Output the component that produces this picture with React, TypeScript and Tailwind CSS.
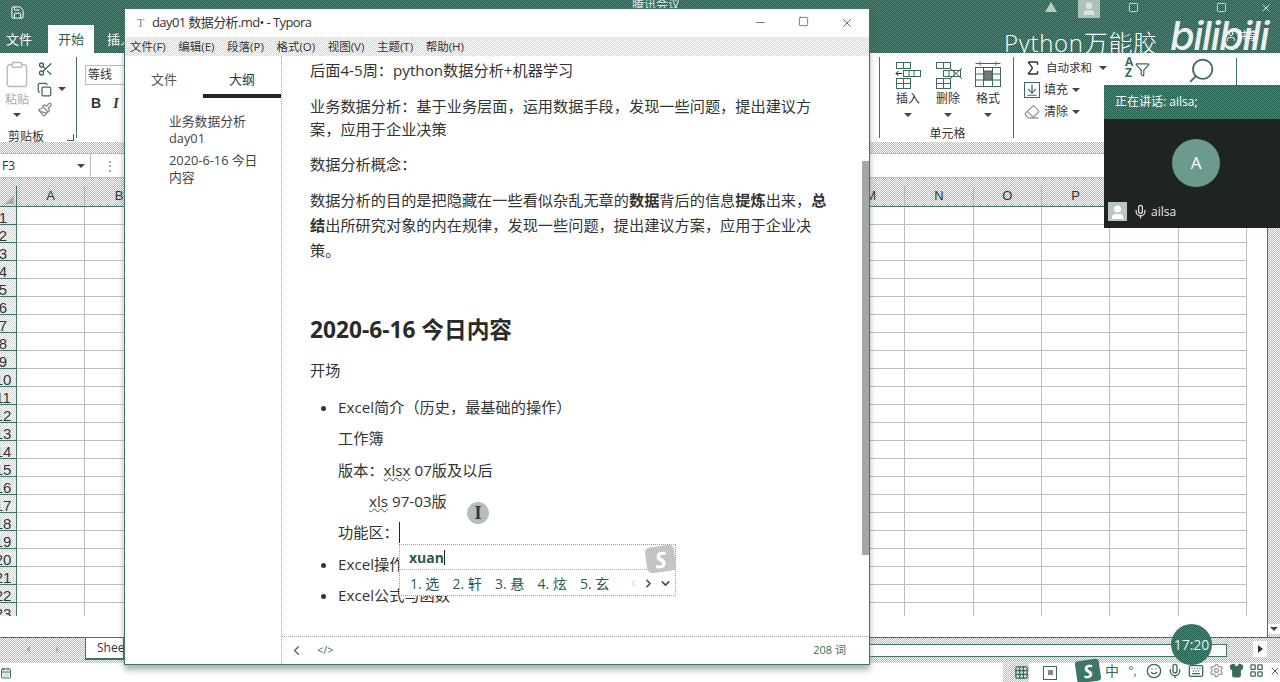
import { Scissors, Copy, Paintbrush, ChevronLeft, ChevronRight, ChevronDown, Mic, Smile, Keyboard, Grid3x3, Minus, Square, X, User, Save, Sigma, Search, ArrowDownToLine, Eraser, Filter, Shirt, LayoutGrid, CalendarDays, Settings, Clipboard } from "lucide-react";

const dGray = "bg-[image:repeating-conic-gradient(#b4b9b7_0_25%,#ffffff_0_50%)] bg-[length:2px_2px]";
const dTeal = "bg-[image:repeating-conic-gradient(#1d5c4b_0_25%,#578a7c_0_50%)] bg-[length:2px_2px]";
const dLight = "bg-[image:repeating-conic-gradient(#d4d6d5_0_25%,#ffffff_0_50%)] bg-[length:2px_2px]";

const columns = ["A", "B", "C", "D", "E", "F", "G", "H", "I", "J", "K", "L", "M", "N", "O", "P", "Q", "R"];
const rows = Array.from({ length: 24 }, (_, i) => i + 1);

function Caret() {
  return <span className="block w-0 h-0 border-x-[4px] border-x-transparent border-t-[4px] border-t-[#444]" />;
}

function CellIcon({ kind }: { kind: "insert" | "delete" | "format" }) {
  return (
    <svg width="30" height="30" viewBox="0 0 30 30" fill="none" stroke="#3c6b5e" strokeWidth="1">
      {kind === "format" ? (
        <>
          <rect x="2.5" y="7.5" width="25" height="19" />
          <path d="M2.5 3.5h25M6 3.5l2-2M6 3.5l2 2M24 3.5l-2-2M24 3.5l-2 2M10.5 7.5v19M19.5 7.5v19M2.5 14h25M2.5 20h25" />
          <rect x="11" y="11" width="8" height="9" fill="#777" />
        </>
      ) : (
        <>
          <rect x="3.5" y="2.5" width="14" height="6" />
          <path d="M10.5 2.5v6" />
          <rect x="3.5" y="18.5" width="14" height="10" />
          <path d="M10.5 18.5v10M3.5 23.5h14" />
          <rect x="10.5" y="10.5" width="17" height="6" />
          <path d="M16 10.5v6M21 10.5v6" />
          {kind === "insert" ? <path d="M9 13.5H3M5.5 11l-2.5 2.5 2.5 2.5" stroke="#222" /> : <path d="M17 19L29 8M17 8l12 11" stroke="#555" />}
        </>
      )}
    </svg>
  );
}

function CellCommand({ kind, label }: { kind: "insert" | "delete" | "format"; label: string }) {
  return (
    <div className="w-[40px] flex flex-col items-center">
      <CellIcon kind={kind} />
      <span className="text-[12px] leading-[16px] mt-[1px]">{label}</span>
      <span className="mt-[6px]"><Caret /></span>
    </div>
  );
}

function ExcelWindow() {
  return (
    <div className="flex flex-col h-[682px] text-[#333]">
      <header className={`${dTeal} h-[53px] shrink-0 flex flex-col justify-between`}>
        <div className="h-[25px] flex items-center pl-[10px] pr-[8px] text-white">
          <Save size={15} strokeWidth={1.6} />
          <div className="ml-auto flex items-start h-[25px] opacity-80">
            <span className="block w-0 h-0 mt-[2px] border-x-[6px] border-x-transparent border-b-[10px] border-b-[#d7e2de]" />
            <span className="ml-[21px] w-[22px] h-[18px] bg-[#c9d3d0] flex items-center justify-center"><User size={16} fill="#fff" stroke="#fff" /></span>
            <Square size={11} className="ml-[28px] mt-[2px]" />
            <Square size={11} className="ml-[77px] mt-[2px]" />
            <X size={12} className="ml-[33px] mt-[2px]" />
          </div>
        </div>
        <nav className="h-[28px] flex items-end text-[13px]">
          <span className="text-white pl-[6px] w-[48px] leading-[28px]">文件</span>
          <span className="w-[46px] h-[28px] bg-white text-center leading-[28px] text-[#2c5a4e]">开始</span>
          <span className="text-white pl-[13px] leading-[28px]">插入</span>
        </nav>
      </header>

      <section className="h-[89px] shrink-0 bg-white flex justify-between text-[12px]">
        <div className="flex">
          <div className="w-[77px] border-r border-[#3f7566] my-[4px] h-[81px] relative flex flex-col">
            <div className="flex pl-[3px] pt-[3px] gap-[6px] h-[60px]">
              <div className="flex flex-col items-center w-[28px] text-[#aaa]">
                <Clipboard size={30} strokeWidth={1.2} className="text-[#bbb]" />
                <span className="leading-[15px] mt-[3px] whitespace-nowrap">粘贴</span>
                <span className="mt-[6px]"><Caret /></span>
              </div>
              <div className="flex flex-col gap-[5px] items-start text-[#3a6a5d] pt-[1px]">
                <Scissors size={17} />
                <span className="flex items-center gap-[6px]"><Copy size={15} /><Caret /></span>
                <Paintbrush size={16} className="text-[#888]" />
              </div>
            </div>
            <div className="flex items-center justify-between pl-[8px] pr-[2px] mt-[11px]">
              <span className="text-[#333]">剪贴板</span>
              <span className="w-[7px] h-[7px] border-l border-t border-[#555] rotate-180" />
            </div>
          </div>
          <div className="pl-[8px] pt-[12px] w-[47px]">
            <div className="h-[20px] w-[60px] border border-[#bbb] bg-white pl-[2px] leading-[18px]">等线</div>
            <div className="flex gap-[12px] font-['Liberation_Serif',serif] pt-[8px] pl-[6px] text-[14px] font-bold">
              <span className="font-['Liberation_Sans',sans-serif]">B</span><span className="italic">I</span>
            </div>
          </div>
        </div>

        <div className="flex">
          <div className="flex border-l border-r border-[#3f7566] my-[4px] h-[81px] w-[135px] relative pl-[8px] pt-[3px]">
            <div className="flex flex-col w-full">
              <div className="flex"><CellCommand kind="insert" label="插入" /><CellCommand kind="delete" label="删除" /><CellCommand kind="format" label="格式" /></div>
              <span className="text-center pr-[6px] mt-[8px]">单元格</span>
            </div>
          </div>
          <div className="w-[266px] pl-[10px] pt-[5px] flex">
            <div className="flex flex-col gap-[3px] w-[95px]">
              <div className="h-[19px] flex items-center gap-[4px]"><Sigma size={18} className="text-[#333]" /><span className="text-[11.5px]">自动求和</span><span className="ml-[3px]"><Caret /></span></div>
              <div className="h-[19px] flex items-center gap-[4px]"><ArrowDownToLine size={16} className="text-[#3a6a5d] border border-[#3a6a5d]" /><span>填充</span><Caret /></div>
              <div className="h-[19px] flex items-center gap-[4px]"><Eraser size={16} className="text-[#999]" /><span>清除</span><Caret /></div>
            </div>
            <div className="flex items-start -mt-[2px]">
              <span className="leading-[11px] text-[12px] font-bold text-[#3a6a5d] w-[10px] ml-[6px]">A Z</span>
              <Filter size={15} className="text-[#3a6a5d] mt-[6px]" />
              <Search size={29} strokeWidth={1.5} className="ml-[37px] -scale-x-100 text-[#3a6a5d]" />
            </div>
            <div className="border-l border-[#3f7566] h-[28px] ml-[20px]" />
          </div>
        </div>
      </section>

      <div className={`${dGray} h-[11px] shrink-0`} />
      <div className="h-[25px] shrink-0 bg-white border-y border-[#bbb] flex items-center text-[12px]">
        <div className="w-[91px] h-full flex items-center justify-between pl-[2px] pr-[5px] border-r border-[#bbb]">
          <span>F3</span><Caret />
        </div>
        <span className="ml-[13px] text-[#777] leading-none">⋮</span>
      </div>
      <div className={`${dGray} h-[8px] shrink-0`} />

      <div className="flex-1 min-h-0 flex">
        <div className="w-[1267px] overflow-hidden">
          <div className={`${dGray} h-[21px] grid grid-cols-[17px_repeat(18,68.33px)] border-b border-[#3f7566] text-[13px] font-['Liberation_Sans',sans-serif]`}>
            <div className="border-r border-[#3f7566] relative overflow-hidden">
              <span className="absolute right-[2px] bottom-[2px] w-0 h-0 border-l-[9px] border-l-transparent border-b-[9px] border-b-[#aaa]" />
            </div>
            {columns.map((c) => (
              <div key={c} className="text-center leading-[20px] border-r border-[#b5b5b5]">{c}</div>
            ))}
          </div>
          <div className="h-[409px] overflow-hidden">
            {rows.map((r) => (
              <div key={r} className="h-[18px] grid grid-cols-[17px_repeat(18,68.33px)] font-['Liberation_Sans',sans-serif]">
                <div className={`${dLight} border-r border-b border-[#3f7566] text-[15px] leading-[21px] text-[#333] overflow-hidden whitespace-nowrap`}>
                  <span className="w-[6px] flex justify-center">{r}</span>
                </div>
                {columns.map((c) => (
                  <div key={c} className="border-r border-b border-[#bdbdbd] bg-white" />
                ))}
              </div>
            ))}
          </div>
        </div>
        <div className={`${dGray} w-[13px] border-l border-[#3f7566] flex flex-col justify-end pb-[3px] items-center`}>
          <span className="bg-white w-full flex justify-center py-[3px]"><Caret /></span>
        </div>
      </div>

      <div className={`${dGray} h-[26px] shrink-0 border-t border-[#3f7566] flex items-start`}>
        <div className="w-[85px] h-[22px] flex items-center justify-center gap-[18px] text-[#aaa]">
          <ChevronLeft size={11} fill="#aaa" /><ChevronRight size={11} fill="#aaa" />
        </div>
        <div className="w-[39px] h-[22px] bg-white border-x border-b-2 border-[#3f7566] text-[12px] pl-[11px] leading-[20px] overflow-hidden">Sheet1</div>
        <div className="mt-[6px] h-[13px] w-[1103px] bg-white border-y border-r border-[#3f7566]" />
        <span className="ml-[26px] mt-[3px] w-[14px] h-[16px] bg-white flex items-center justify-center">
          <span className="w-0 h-0 border-y-[4px] border-y-transparent border-l-[5px] border-l-[#333]" />
        </span>
      </div>

      <footer className="h-[19px] shrink-0 bg-white flex items-center text-[#3a6a5d]">
        <CalendarDays size={12} />
        <span className={`${dGray} ml-[991px] h-[19px] w-[26px] flex items-center justify-end`}><Grid3x3 size={15} /></span>
        <span className="ml-[14px] w-[14px] h-[14px] border border-[#3a6a5d] flex items-center justify-center"><span className="w-[5px] h-[5px] bg-[#888]" /></span>
      </footer>
    </div>
  );
}

function TyporaWindow() {
  return (
    <div className="absolute left-[124px] top-[8px] w-[746px] h-[657px] bg-white border border-[#3f7566] shadow-[0_5px_6px_rgba(70,90,85,0.45)] flex flex-col text-[#333]">
      <div className="h-[28px] shrink-0 flex items-center pl-[12px] text-[13px]">
        <span className="w-[15px] text-[#888] text-[12px] font-['Liberation_Serif',serif]">T</span>
        <span className="tracking-[-0.6px]">day01 数据分析.md• - Typora</span>
        <div className="ml-auto mr-[1px] flex text-[#333]">
          <span className="w-[43px] flex justify-center"><Minus size={13} strokeWidth={1.3} /></span>
          <span className="w-[43px] flex justify-center"><Square size={11} strokeWidth={1.4} /></span>
          <span className="w-[43px] flex justify-center"><X size={14} strokeWidth={1.2} /></span>
        </div>
      </div>
      <div className={`${dLight} h-[19px] shrink-0 flex items-center gap-[12.6px] pl-[5px] text-[11.5px]`}>
        {["文件(F)", "编辑(E)", "段落(P)", "格式(O)", "视图(V)", "主题(T)", "帮助(H)"].map((m) => (
          <span key={m} className="leading-[19px]">{m}</span>
        ))}
      </div>
      <div className="flex-1 min-h-0 flex">
        <aside className="w-[157px] shrink-0 border-r border-dotted border-[#aaa] flex flex-col">
          <div className="flex h-[42px] text-[13px]">
            <span className="w-[78px] text-center leading-[46px] text-[#555]">文件</span>
            <span className="w-[78px] text-center leading-[46px] border-b-4 border-[#222]">大纲</span>
          </div>
          <ul className="pl-[44px] pr-[22px] pt-[15px] text-[12.8px] leading-[17px] text-[#444] space-y-[5px]">
            <li>业务数据分析 day01</li>
            <li>2020-6-16 今日内容</li>
          </ul>
        </aside>
        <div className="flex-1 min-w-0 flex flex-col relative">
          <main className="flex-1 min-h-0 overflow-hidden pl-[28px] pt-[2px] pr-[8px] text-[15.2px] leading-[25px] w-[560px]">
            <p>后面4-5周：python数据分析+机器学习</p>
            <p className="mt-[11.5px] leading-[23px]">业务数据分析：基于业务层面，运用数据手段，发现一些问题，提出建议方案，应用于企业决策</p>
            <p className="mt-[11.5px]">数据分析概念：</p>
            <p className="mt-[11px]">数据分析的目的是把隐藏在一些看似杂乱无章的<b>数据</b>背后的信息<b>提炼</b>出来，<b>总结</b>出所研究对象的内在规律，发现一些问题，提出建议方案，应用于企业决策。</p>
            <h2 className="mt-[52px] text-[22.7px] leading-[30px] font-bold text-[#2a2a2a]">2020-6-16 今日内容</h2>
            <p className="mt-[13px]">开场</p>
            <ul className="list-disc pl-[28px] mt-[12px]">
              <li>
                Excel简介（历史，最基础的操作）
                <p className="mt-[6.33px]">工作簿</p>
                <p className="mt-[6.33px]">版本：<span className="underline decoration-wavy decoration-[#555] decoration-1">xlsx</span> 07版及以后</p>
                <p className="mt-[6.33px] pl-[31px]"><span className="underline decoration-wavy decoration-[#555] decoration-1">xls</span> 97-03版</p>
                <p className="mt-[6.33px]">功能区：</p>
              </li>
              <li className="mt-[6.33px]">Excel操作</li>
              <li className="mt-[6.33px]">Excel公式与函数</li>
            </ul>
          </main>
          <span className="absolute right-0 top-[105px] w-[7px] h-[394px] bg-[#a3a8a6]" />
          <div className="h-[28px] shrink-0 border-t border-dotted border-[#aaa] flex items-center pl-[7px] text-[#3f6a5e] text-[12px]">
            <ChevronLeft size={15} />
            <span className="ml-[13px] text-[11px]">&lt;/&gt;</span>
            <span className="ml-auto mr-[23px] text-[11px]">208 词</span>
          </div>
        </div>
      </div>
    </div>
  );
}

function ImePopup() {
  return (
    <div className="absolute left-[399px] top-[544px] w-[277px] h-[52px] bg-white border border-dotted border-[#999] text-[#2c5a4e]">
      <div className="h-[25px] border-b border-dotted border-[#aaa] pl-[9px] flex items-center text-[14px] font-bold">
        xuan<span className="w-px h-[15px] bg-[#222]" />
      </div>
      <div className="h-[26px] flex items-center pl-[10px] text-[14px]">
        {["1. 选", "2. 轩", "3. 悬", "4. 炫", "5. 玄"].map((c) => (
          <span key={c} className="w-[42.5px] whitespace-nowrap">{c}</span>
        ))}
        <ChevronLeft size={11} className="ml-[5px] text-[#bbb]" />
        <ChevronRight size={13} className="ml-[3px]" strokeWidth={3} />
        <ChevronDown size={13} className="ml-[4px]" strokeWidth={3} />
      </div>
      <span className="absolute right-0 top-[1px] w-[29px] h-[26px] bg-[#c4c4c4] rounded-[5px] rotate-[-8deg] flex items-center justify-center text-white text-[22px] font-bold italic leading-none">S</span>
    </div>
  );
}

function MeetingPanel() {
  return (
    <div className="absolute left-[1104px] top-[85px] w-[176px] h-[143px] bg-[#202324] flex flex-col text-white">
      <div className={`${dTeal} h-[34px] shrink-0 flex items-center pl-[11px] text-[12px]`}>正在讲话: ailsa;</div>
      <div className="flex-1 flex items-center justify-center pt-[6px] pl-[8px]">
        <span className="w-[48px] h-[48px] rounded-full bg-[#6d9a8e] flex items-center justify-center text-[17px]">A</span>
      </div>
      <div className="h-[27px] shrink-0 flex items-center pl-[4px] pb-[6px] text-[12px] text-[#e6e6e6]">
        <span className="w-[19px] h-[19px] bg-[#b9c6c2] flex items-end justify-center overflow-hidden"><User size={17} fill="#fff" stroke="#fff" /></span>
        <Mic size={15} className="ml-[6px]" />
        <span className="ml-[3px]">ailsa</span>
      </div>
    </div>
  );
}

export default function App() {
  return (
    <div className="relative w-[1280px] h-[682px] overflow-hidden bg-white font-['Open_Sans','Noto_Sans_CJK_SC',sans-serif]">
      <ExcelWindow />

      <div className={`${dTeal} absolute left-[592px] top-0 w-[92px] h-[12px] rounded-b-[5px] overflow-hidden text-[#dfe8e5] text-[12px] leading-[10px] pl-[40px] whitespace-nowrap`}>腾讯会议</div>

      <TyporaWindow />

      <div className="absolute left-[1004px] top-[29px] text-white text-[24px] leading-[28px] tracking-[0.7px] whitespace-nowrap font-light">Python万能胶</div>
      <div className="absolute left-[1170px] top-[13px] text-white text-[40px] leading-[46px] font-medium italic font-['Inter',sans-serif] tracking-[-1.5px] whitespace-nowrap opacity-90">bilibili</div>
      <div className="absolute left-[1225px] top-[29px] flex items-center text-white text-[11px] leading-[14px]"><User size={12} />共享</div>

      <MeetingPanel />

      <span className="absolute left-[399px] top-[522px] w-px h-[21px] bg-[#222]" />
      <ImePopup />

      <div className="absolute left-[467px] top-[502px] w-[22px] h-[22px] rounded-full bg-[#b8bdbb] flex items-center justify-center text-[#1f3f36] text-[18px] font-bold font-['Liberation_Serif',serif] leading-none">I</div>

      <div className={`${dTeal} absolute left-[1171px] top-[624px] w-[41px] h-[41px] rounded-full flex items-center justify-center text-[#e8efec] text-[14px] leading-none`}>17:20</div>

      <div className="absolute left-[1076px] top-[659px] h-[23px] flex items-center text-[#3a6a5d] gap-[5px]">
        <span className="w-[24px] h-[22px] bg-[#3f7566] rounded-[3px] rotate-[-8deg] flex items-center justify-center text-white font-bold italic text-[18px] leading-none">S</span>
        <span className="text-[14px] leading-none">中</span>
        <span className="text-[12px] leading-none w-[17px] text-center">°,</span>
        <Smile size={16} />
        <Mic size={16} />
        <Keyboard size={16} />
        <Settings size={15} className="text-[#999]" />
        <Shirt size={15} fill="#3a6a5d" />
        <LayoutGrid size={15} />
        <X size={12} />
      </div>
    </div>
  );
}
